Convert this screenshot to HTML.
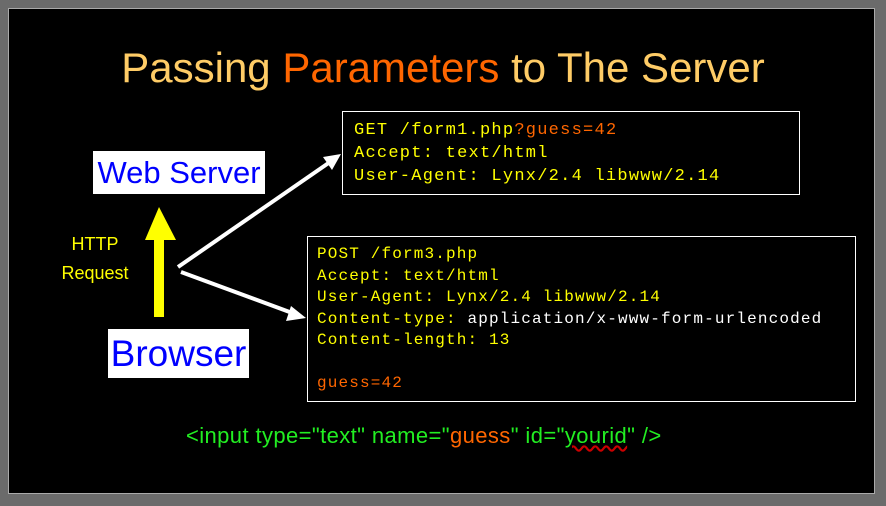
<!DOCTYPE html>
<html><head><meta charset="utf-8"><style>
body{margin:0;width:886px;height:506px;background:#6b6b6b;position:relative;overflow:hidden;font-family:"Liberation Sans",sans-serif}
#s{position:absolute;left:8px;top:8px;width:867px;height:486px;background:#000;border:1px solid #aaa;box-sizing:border-box}
.a{position:absolute;white-space:nowrap}
.mono{font-family:"Liberation Mono",monospace;color:#ffff00}
.box{position:absolute;border:1px solid #fff;box-sizing:border-box}
</style></head><body>
<div id="s"></div>
<div class="a" style="left:100px;top:44px;width:686px;text-align:center;font-size:42px;color:#ffcc66">Passing <span style="color:#ff6600">Parameters</span> to The Server</div>
<div class="box" style="left:342px;top:111px;width:458px;height:84px"></div>
<div class="a mono" style="left:354px;top:119px;line-height:23px;font-size:17px;letter-spacing:1.25px">GET /form1.php<span style="color:#ff6600">?guess=42</span><br>Accept: text/html<br>User-Agent: Lynx/2.4 libwww/2.14</div>
<div class="box" style="left:307px;top:236px;width:549px;height:166px"></div>
<div class="a mono" style="left:317px;top:244px;line-height:21.5px;font-size:16px;letter-spacing:1.15px">POST /form3.php<br>Accept: text/html<br>User-Agent: Lynx/2.4 libwww/2.14<br>Content-type: <span style="color:#fff">application/x-www-form-urlencoded</span><br>Content-length: 13<br><br><span style="color:#ff6600">guess=42</span></div>
<div class="a" style="left:93px;top:151px;width:172px;height:43px;background:#fff;color:#0000ff;font-size:31px;text-align:center;line-height:43px">Web Server</div>
<div class="a" style="left:108px;top:329px;width:141px;height:49px;background:#fff;color:#0000ff;font-size:37px;text-align:center;line-height:49px">Browser</div>
<div class="a" style="left:45px;top:230px;width:100px;text-align:center;color:#ffff00;font-size:18px;line-height:29px">HTTP<br>Request</div>
<svg class="a" style="left:0;top:0" width="886" height="506">
<polygon points="154,317 164,317 164,240 176,240 159,207 145,240 154,240" fill="#ffff00"/>
<line x1="178" y1="267" x2="330" y2="162" stroke="#fff" stroke-width="4"/>
<polygon points="341,154 323,157 332,170" fill="#fff"/>
<line x1="181" y1="272" x2="295" y2="314" stroke="#fff" stroke-width="4"/>
<polygon points="306,318 291,306 286,321" fill="#fff"/>
</svg>
<div class="a" style="left:186px;top:423px;font-size:22px;color:#22ee22;letter-spacing:0.4px">&lt;input type="text" name="<span style="color:#ff6600">guess</span>" id="<span style="text-decoration:underline wavy #c00">yourid</span>" /&gt;</div>
</body></html>
